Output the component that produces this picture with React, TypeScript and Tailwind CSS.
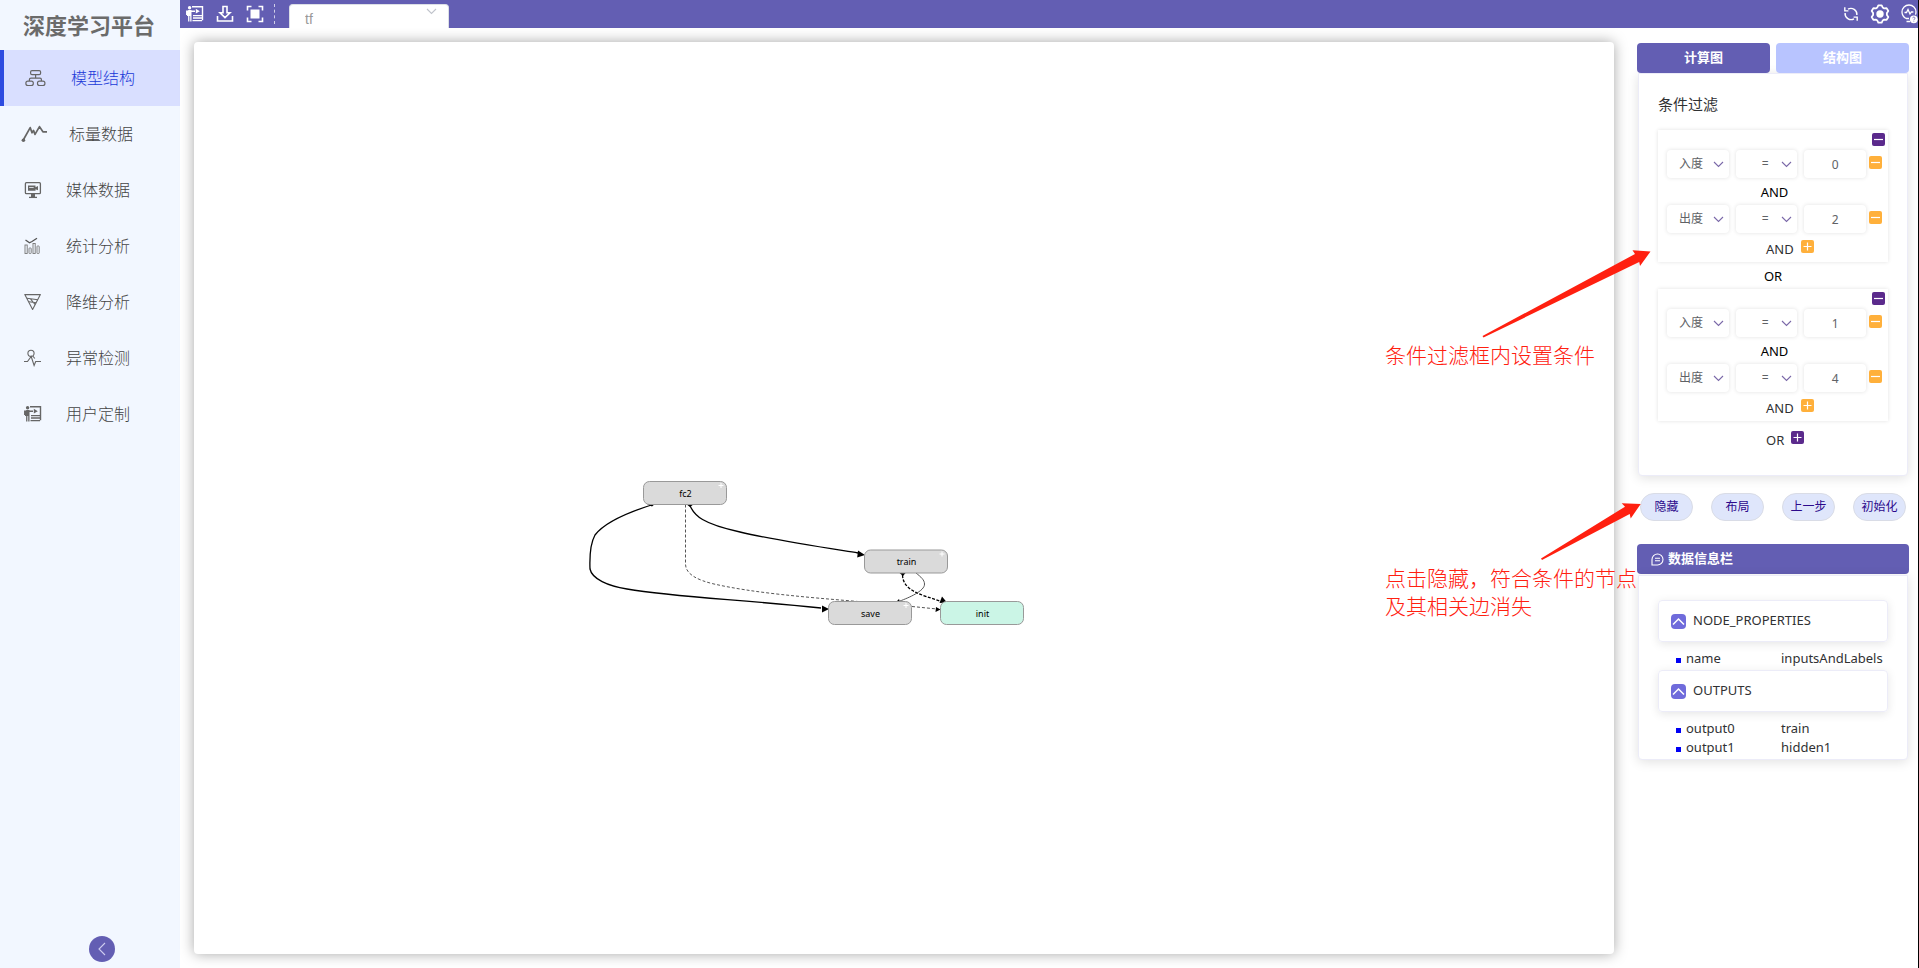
import React, { useState } from "react";
import { clsx } from "clsx";

type IconProps = { className?: string };

const StructureIcon = () => (
  <svg width="21" height="18" viewBox="0 0 21 18" fill="none" stroke="#666" strokeWidth="1.2">
    <rect x="5.6" y="1.6" width="10" height="4" rx="1.4" />
    <rect x="0.9" y="12.1" width="7.4" height="4.4" rx="2" />
    <rect x="12.5" y="12.1" width="7.4" height="4.4" rx="2" />
    <path d="M10.6 5.6v3.6M4.4 12V10.6Q4.4 9.2 6 9.2h9Q16.4 9.2 16.4 10.6V12" />
  </svg>
);

const ScalarIcon = () => (
  <svg width="27" height="18" viewBox="0 0 27 18" fill="none" stroke="#666" strokeWidth="1.7" strokeLinejoin="round" className="shrink-0">
    <path d="M2 15.5 9.2 2.6l1.8 5.2 1.5-2.4 1.5 4 4.5-7.8 3.4 5.2H26" />
    <circle cx="2.4" cy="15.3" r="1.8" fill="#666" stroke="none" />
  </svg>
);

const MediaIcon = () => (
  <svg width="18" height="18" viewBox="0 0 18 18" fill="none" stroke="#666" strokeWidth="1.3">
    <rect x="1.4" y="1.7" width="15" height="11" rx="1" />
    <path d="M4 4.5h7.5v1.8l2.5-1.2v4.2l-2.5-1V9.8H4z" fill="#666" stroke="none" />
    <path d="M5.2 6.5h4.5" stroke="#f2f7ff" strokeWidth="0.8" />
    <path d="M9 13v3" strokeWidth="4" />
    <path d="M5 16.4h8" />
  </svg>
);

const StatsIcon = () => (
  <svg width="18" height="18" viewBox="0 0 18 18" fill="none" stroke="#777" strokeWidth="0.9">
    <rect x="1" y="8" width="2.2" height="8.5" />
    <rect x="5" y="11" width="2.2" height="5.5" rx="0.6" />
    <rect x="9" y="6.5" width="2.2" height="10" />
    <rect x="13" y="9" width="2.2" height="7.5" rx="0.6" />
    <path d="M1.5 3 5.5 5.8 8 4.5 13 1.2" strokeWidth="1.3" stroke="#555" />
  </svg>
);

const ReduceIcon = () => (
  <svg width="18" height="18" viewBox="0 0 18 18" fill="none" stroke="#666" strokeWidth="1.1" strokeLinejoin="round">
    <path d="M0.8 1.6h15.6L8.6 16.5z" />
    <path d="M3 5.2 13.8 6.8M5 8.8 12.2 9.8M6.5 5.8 11 11.5" />
  </svg>
);

const AnomalyIcon = () => (
  <svg width="18" height="18" viewBox="0 0 18 18" fill="none" stroke="#666" strokeWidth="1.1">
    <circle cx="7" cy="4.3" r="3.1" />
    <path d="M0 12.5h3.5L7.2 7.5l2.9 9 1.6-4H17M8.8 7l2 2.5" />
  </svg>
);

const PresentIcon = ({ className }: IconProps) => (
  <svg width="18" height="18" viewBox="0 0 18 18" fill="none" stroke="currentColor" className={className}>
    <circle cx="3.6" cy="2.8" r="1.7" fill="currentColor" stroke="none" />
    <path d="M1 6 2.5 5H5.5v11.5H4.2V11H3.4v5.5H2.1V11H1z" fill="currentColor" stroke="none" />
    <path d="M0.8 5.5V10M5 6.3h4" strokeWidth="1.5" />
    <path d="M6 1.7h10.5v13.5" strokeWidth="1.4" />
    <path d="m9.8 3.8 4 2.4-4 2.4z" fill="currentColor" stroke="none" />
    <path d="M7 10.7h9M7 13h9M6.5 15.7h9.5" strokeWidth="1.3" />
  </svg>
);

const DownloadIcon = () => (
  <svg width="18" height="18" viewBox="0 0 18 18" fill="none" stroke="white" strokeWidth="1.6">
    <path d="M7 1.5h4v6.3h3L9 12.6 4 7.8h3z" />
    <path d="M1.5 11v5h15v-5" />
  </svg>
);

const FocusIcon = () => (
  <svg width="18" height="18" viewBox="0 0 18 18" fill="none" stroke="white" strokeWidth="1.6">
    <path d="M1.5 5.5v-4h4M12.5 1.5h4v4M16.5 12.5v4h-4M5.5 16.5h-4v-4" />
    <rect x="4.5" y="4.5" width="9" height="9" fill="white" stroke="none" />
  </svg>
);

const RefreshIcon = () => (
  <svg width="16" height="16" viewBox="0 0 16 16" fill="none" stroke="white" strokeWidth="1.4">
    <path d="M5 3.2A6 6 0 0 1 13.9 9M11 12.8A6 6 0 0 1 2.1 7" />
    <path d="M1.8 1.3v3.6h3.6M14.2 14.7v-3.6h-3.6" />
  </svg>
);

const GearIcon = () => (
  <svg width="20" height="20" viewBox="0 0 20 20" fill="none" stroke="white" strokeWidth="1.8" strokeLinejoin="round">
    <path d="M7.3 3.5 8.3 1.3h3.4l1 2.2 1.5.9 2.4-.3 1.7 2.9-1.4 2v2l1.4 2-1.7 2.9-2.4-.3-1.5.9-1 2.2H8.3l-1-2.2-1.5-.9-2.4.3L1.7 13l1.4-2V9L1.7 7l1.7-2.9 2.4.3z" />
    <circle cx="10" cy="10" r="3.7" fill="white" stroke="none" />
  </svg>
);

const HelpBulbIcon = () => (
  <svg width="17" height="20" viewBox="0 0 17 20" fill="none" stroke="white" strokeWidth="1.3">
    <path d="M5 14.5C2.5 13 1 10.8 1 8a7 7 0 0 1 14 0c0 1-.2 1.8-.6 2.6M5 14.5h3M5.5 17.5H9" />
    <path d="M3.5 8.5h2l1.5-3 2 4.5 1.4-2h2" />
    <circle cx="12.8" cy="15.3" r="3.9" fill="white" stroke="none" />
    <path d="M11.6 14.2c.2-1.6 2.5-1.4 2.4 0 0 .9-1.2.9-1.2 1.9M12.8 16.8v.8" stroke="#635eb3" strokeWidth="0.8" />
  </svg>
);

const ChatIcon = () => (
  <svg width="13" height="13" viewBox="0 0 13 13" fill="none" stroke="white" strokeWidth="1.1">
    <path d="M1 12V6.5A5.5 5.5 0 1 1 6.5 12z" />
    <path d="M4 5.3h5M4 7.8h5" />
  </svg>
);

const Chevron = ({ className }: IconProps) => (
  <svg width="11" height="7" viewBox="0 0 11 7" fill="none" stroke="currentColor" className={clsx("pointer-events-none absolute", className)}>
    <path d="M1 1l4.5 4.5L10 1" strokeWidth="1.1" />
  </svg>
);

type NavItem = { label: string; icon: React.ReactNode; iconBox: string };

const NAV: NavItem[] = [
  { label: "模型结构", icon: <StructureIcon />, iconBox: "w-[23px]" },
  { label: "标量数据", icon: <ScalarIcon />, iconBox: "w-[21px]" },
  { label: "媒体数据", icon: <MediaIcon />, iconBox: "w-[18px]" },
  { label: "统计分析", icon: <StatsIcon />, iconBox: "w-[18px]" },
  { label: "降维分析", icon: <ReduceIcon />, iconBox: "w-[18px]" },
  { label: "异常检测", icon: <AnomalyIcon />, iconBox: "w-[18px]" },
  { label: "用户定制", icon: <PresentIcon />, iconBox: "w-[18px]" },
];

function Sidebar() {
  return (
    <aside className="flex w-[180px] shrink-0 flex-col bg-[#f2f7ff]">
      <h1 className="flex h-[50px] items-center pl-[23px] text-[22px] font-bold text-[#6b6b6b]">深度学习平台</h1>
      <nav>
        {NAV.map((item, i) => (
          <a
            key={item.label}
            href="#"
            className={clsx(
              "flex h-14 items-center gap-6 border-l-4 pl-5 text-base font-light",
              i === 0 ? "border-[#2d4be0] bg-[#d9dfff] text-[#2039d8]" : "border-transparent text-[#444]",
            )}
          >
            <span className={clsx("flex shrink-0 justify-center text-[#666]", item.iconBox)}>{item.icon}</span>
            {item.label}
          </a>
        ))}
      </nav>
      <button aria-label="收起" className="mt-auto mb-1.5 ml-[89px] flex size-[26px] items-center justify-center rounded-full bg-[#635eb3]">
        <svg width="8" height="14" viewBox="0 0 8 14" fill="none" stroke="#cfcdf0" strokeWidth="1.1">
          <path d="M7 1 1 7l6 6" />
        </svg>
      </button>
    </aside>
  );
}

function TopBar() {
  return (
    <header className="flex h-7 shrink-0 items-center bg-[#635eb3]">
      <div className="flex items-center gap-3 pl-1.5 text-white">
        <button aria-label="演示"><PresentIcon /></button>
        <button aria-label="下载"><DownloadIcon /></button>
        <button aria-label="全屏"><FocusIcon /></button>
      </div>
      <div className="ml-2.5 h-5 border-l border-dashed border-white/70" />
      <div className="relative ml-3.5 w-40 self-end">
        <select aria-label="文件" className="block h-6 w-full appearance-none rounded-t border border-b-0 border-[#dcdfe6] bg-white pt-1 pl-[15px] font-['Liberation_Sans',sans-serif] text-sm text-[#999]">
          <option>tf</option>
        </select>
        <Chevron className="top-1 right-3 text-[#c0c4cc]" />
      </div>
      <div className="ml-auto flex items-center gap-[11px]">
        <button aria-label="刷新"><RefreshIcon /></button>
        <button aria-label="设置"><GearIcon /></button>
        <button aria-label="帮助"><HelpBulbIcon /></button>
      </div>
    </header>
  );
}

type GraphNode = { id: string; x: number; y: number; leaf?: boolean };

const NODES: GraphNode[] = [
  { id: "fc2", x: 449.5, y: 439.5 },
  { id: "train", x: 670.5, y: 508 },
  { id: "save", x: 634.5, y: 559.5 },
  { id: "init", x: 746.5, y: 559.5, leaf: true },
];

function Graph() {
  return (
    <svg width="860" height="620" viewBox="0 0 860 620" role="img" aria-label="计算图">
      <g fill="none" stroke="#000">
        <path d="M459 462.500C435 470 411 480 401 493 396 502 395.500 514 396 527 398 537 414 544 433 547 480 555 540 557 627 566" strokeWidth="1.3" />
        <path d="M495.500 462.500C500 474 509 482 546 490 580 498 620 504 664 511" strokeWidth="1.3" />
        <path d="M491.500 462.500V522C491.500 532 503 538 520 542 560 551 610 555 664 559.500M718 564.500 743 567" stroke="#555" strokeDasharray="3 2" />
        <path d="M708.500 533C709 549 728 553 746 559" strokeWidth="1.3" strokeDasharray="3 1.5" />
        <path d="M722 531C727 535 730.500 538 730.500 542 731 549 714 556 706 559" stroke="#555" />
      </g>
      <g fill="#000">
        <path d="M635 567l-7-3.5v7zM671 513l-7-4.500-.8 7zM753 560.500l-5-6-2.500 6.500zM746.500 567.500l-4.500-2.500-.5 5zM702 560l3-3 1 3z" />
        <path d="M453 462h8l-3 2.500zM492 462h8l-4 3zM705 530.500h7l-3 3.500z" />
      </g>
      {NODES.map((n) => (
        <g key={n.id}>
          <rect x={n.x} y={n.y} width="83" height="23" rx="6" fill={n.leaf ? "#cbf5e6" : "#dadada"} stroke="#999" />
          {!n.leaf && <path d={`M${n.x + 75} ${n.y + 4}h5M${n.x + 77.5} ${n.y + 1.5}v5`} stroke="#fff" />}
          <text x={n.x + 42} y={n.y + 15} textAnchor="middle" fontSize="9" fill="#000">
            {n.id}
          </text>
        </g>
      ))}
    </svg>
  );
}

const BADGE_COLOR = { purple: "bg-[#5b2a8c]", orange: "bg-[#ffb03b]" };

function SquareButton({ color, plus, label }: { color: "purple" | "orange"; plus?: boolean; label: string }) {
  return (
    <button aria-label={label} className={clsx("flex size-[13px] shrink-0 items-center justify-center rounded-xs", BADGE_COLOR[color])}>
      <svg width="13" height="13" viewBox="0 0 13 13" fill="none" stroke="white" strokeWidth="1.2">
        <path d={plus ? "M2.5 6.5h8M6.5 2.5v8" : "M2 6.5h9"} />
      </svg>
    </button>
  );
}

const FIELD = "block h-7 w-full appearance-none rounded bg-white text-xs text-[#606266] shadow-[0_0_4px_rgba(0,0,0,0.12)]";

function ConditionRow({ field, value }: { field: string; value: string }) {
  return (
    <div className="flex items-center gap-[7px]">
      <div className="relative flex-1">
        <select aria-label="属性" defaultValue={field} className={clsx(FIELD, "pl-3")}>
          <option>入度</option>
          <option>出度</option>
        </select>
        <Chevron className="top-[11px] right-[5px] text-[#7a68a8]" />
      </div>
      <div className="relative flex-1">
        <select aria-label="运算符" className={clsx(FIELD, "pl-[26px]")}>
          <option>=</option>
        </select>
        <Chevron className="top-[11px] right-[5px] text-[#7a68a8]" />
      </div>
      <input aria-label="值" defaultValue={value} className={clsx(FIELD, "min-w-0 flex-1 text-center")} />
      <div className="-ml-1 pb-1">
        <SquareButton color="orange" label="删除条件" />
      </div>
    </div>
  );
}

function ConditionGroup({ values }: { values: [string, string] }) {
  return (
    <div className="h-[132px] pt-[3px] pr-1.5 pl-[9px] shadow-[0_0_4px_rgba(0,0,0,0.12)]">
      <div className="-mr-[3px] mb-1 flex justify-end">
        <SquareButton color="purple" label="删除条件组" />
      </div>
      <ConditionRow field="入度" value={values[0]} />
      <div className="h-[27px] text-center text-[13px] leading-7 text-black">AND</div>
      <ConditionRow field="出度" value={values[1]} />
      <div className="ml-[99px] flex h-[33px] items-center gap-[7px] text-[13px]">
        AND
        <div className="pb-1.5">
          <SquareButton color="orange" plus label="添加条件" />
        </div>
      </div>
    </div>
  );
}

function InfoSection({ title, rows }: { title: string; rows: [string, string][] }) {
  const [open, setOpen] = useState(true);
  return (
    <section className="mb-0.5">
      <button
        onClick={() => setOpen(!open)}
        className="ml-[19px] flex h-[42px] w-[230px] items-center gap-[7px] rounded border border-[#ececf8] pl-3 text-[13px] shadow-[0_2px_10px_rgba(0,0,0,0.1)]"
      >
        <span className="flex size-[15px] items-center justify-center rounded bg-[#6f6bdb]">
          <svg width="13" height="9" viewBox="0 0 13 9" fill="none" stroke="white" strokeWidth="1.5">
            <path d="M1 7.5l5.5-5.5L12 7.5" />
          </svg>
        </span>
        {title}
      </button>
      {open && (
        <dl className="mt-[7px]">
          {rows.map(([k, v]) => (
            <div key={k} className="flex h-[19px] items-center pl-[37px] text-[13px]">
              <span className="mt-1 size-[5px] bg-[#0000f5]" />
              <dt className="w-[100px] pl-[5px]">{k}</dt>
              <dd>{v}</dd>
            </div>
          ))}
        </dl>
      )}
    </section>
  );
}

function Annotations() {
  return (
    <div className="pointer-events-none absolute top-0 -left-[252px] w-[300px] text-[21px] leading-7 text-[#ff2010]">
      <svg width="300" height="560" viewBox="0 0 300 560" fill="#ff2010" className="absolute top-0 left-0">
        <path d="M97.5 294 250 212l-2.5-3.700 18 1.200L255 224l-.8-4L98.5 295.500z" />
        <path d="M156 516.500 240 464.700l-3.300-3.400 19 .7-10 14.500-1-4.500L157 518z" />
      </svg>
      <p className="absolute top-[299px] left-0 font-light whitespace-nowrap">条件过滤框内设置条件</p>
      <p className="absolute top-[522px] left-0 font-light whitespace-nowrap">
        点击隐藏，符合条件的节点
        <br />
        及其相关边消失
      </p>
    </div>
  );
}

const PANEL = "mx-px rounded-b border border-[#ececf8] bg-white shadow-[0_2px_12px_rgba(0,0,0,0.12)]";

function RightPanel() {
  return (
    <aside className="relative w-[272px] shrink-0 pt-px text-[#303133]">
      <div className="flex gap-1.5 text-[13px] font-bold text-white">
        <button className="h-[30px] flex-1 rounded bg-[#635eb3]">计算图</button>
        <button className="h-[30px] flex-1 rounded bg-[#b8c4ff]">结构图</button>
      </div>
      <section className={clsx(PANEL, "px-[19px] pt-[18px] pb-[25px]")}>
        <h2 className="mb-3.5 text-[15px] leading-6">条件过滤</h2>
        <ConditionGroup values={["0", "2"]} />
        <div className="h-[27px] text-center text-[13px] leading-7 text-black">OR</div>
        <ConditionGroup values={["1", "4"]} />
        <div className="ml-[108px] flex h-[29px] items-end gap-[7px] text-[13px]">
          OR
          <div className="pb-1.5">
            <SquareButton color="purple" plus label="添加条件组" />
          </div>
        </div>
      </section>
      <div className="mt-[17px] flex justify-between px-[3px] text-xs text-[#2c0a8c]">
        {["隐藏", "布局", "上一步", "初始化"].map((t) => (
          <button key={t} className="h-7 w-[53px] rounded-full border border-[#d9dce6] bg-[#dfe6fb]">
            {t}
          </button>
        ))}
      </div>
      <h2 className="mt-[23px] flex h-[30px] items-center gap-1 rounded bg-[#635eb3] pl-3.5 text-[13px] font-bold text-white">
        <ChatIcon />
        数据信息栏
      </h2>
      <div className={clsx(PANEL, "mt-px pt-6")}>
        <InfoSection title="NODE_PROPERTIES" rows={[["name", "inputsAndLabels"]]} />
        <InfoSection title="OUTPUTS" rows={[["output0", "train"], ["output1", "hidden1"]]} />
      </div>
      <Annotations />
    </aside>
  );
}

export default function App() {
  return (
    <div className="flex min-h-screen border-r border-black bg-white font-['Noto_Sans','Noto_Sans_CJK_SC',sans-serif]">
      <Sidebar />
      <div className="flex min-w-0 flex-1 flex-col">
        <TopBar />
        <main className="flex flex-1 gap-[23px] pt-3.5 pr-[9px] pb-3.5 pl-3.5">
          <div className="min-w-0 flex-1 overflow-hidden rounded bg-white shadow-[0_0_14px_rgba(0,0,0,0.35)]">
            <Graph />
          </div>
          <RightPanel />
        </main>
      </div>
    </div>
  );
}
